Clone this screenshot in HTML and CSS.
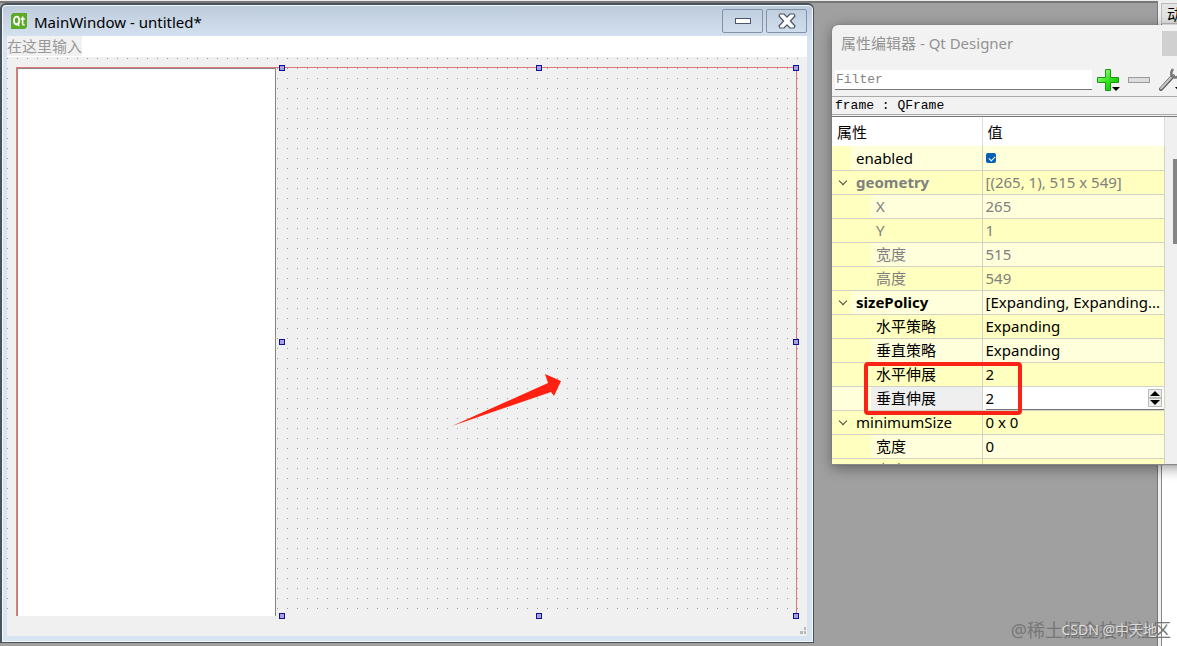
FILE: index.html
```
<!DOCTYPE html>
<html lang="zh-CN">
<head>
    <meta charset="UTF-8">
    <meta name="viewport" content="width=device-width, initial-scale=1.0">
    <title>Qt Designer</title>
    <link rel="stylesheet" href="styles.css">
</head>
<body>
    <div class="desktop">
        <div class="mdi"></div>
        <div class="dock">
            <button class="dock-tab">动作</button>
            <div class="dock-page"></div>
        </div>

        <div class="window form-window">
            <div class="titlebar">
                <svg class="logo" viewBox="0 0 16 16">
                    <path d="M2 0H16V14L14 16H0V2Z" fill="#5caa28"/>
                    <ellipse cx="5.6" cy="7.6" rx="2.6" ry="3.9" fill="none" stroke="#fff" stroke-width="1.8"/>
                    <path d="M6 10L8.2 13M11.6 3.5V10.5Q11.6 12 13.6 11.6M9.6 6H13.8" fill="none" stroke="#fff" stroke-width="1.6"/>
                </svg>
                <span class="title">MainWindow - untitled*</span>
                <button class="win-btn" aria-label="Minimize">
                    <svg width="18" height="8" viewBox="0 0 18 8"><rect x="1.5" y="1.5" width="15" height="5" fill="#fff" stroke="#4c5868"/></svg>
                </button>
                <button class="win-btn" aria-label="Close">
                    <svg width="18" height="16" viewBox="0 0 18 16"><path d="M2 1H6L9 4.2L12 1H16L17 3L12.4 8L17 13L16 15H12L9 11.8L6 15H2L1 13L5.6 8L1 3Z" fill="#fff" stroke="#4c5868" stroke-width="1.2" stroke-linejoin="round"/></svg>
                </button>
            </div>
            <div class="client">
                <div class="menubar"><span class="menu-hint">在这里输入</span></div>
                <div class="form">
                    <div class="layout">
                        <div class="list-view"></div>
                        <div class="frame">
                            <i class="handle top left"></i>
                            <i class="handle top center"></i>
                            <i class="handle top right"></i>
                            <i class="handle middle left"></i>
                            <i class="handle middle right"></i>
                            <i class="handle bottom left"></i>
                            <i class="handle bottom center"></i>
                            <i class="handle bottom right"></i>
                        </div>
                    </div>
                    <svg class="size-grip" viewBox="0 0 6 8"><path d="M0 5H3V8H0ZM4 5H6V8H4ZM4 1H6V4H4Z" fill="#b8b8b8"/></svg>
                </div>
            </div>
        </div>

        <div class="window property-window">
            <div class="property-title">
                <span>属性编辑器 - Qt Designer</span>
                <button class="close-btn" aria-label="Close">×</button>
            </div>
            <div class="toolbar">
                <input class="filter" type="text" placeholder="Filter" aria-label="Filter">
                <button class="tool" aria-label="Add">
                    <svg width="24" height="24" viewBox="0 0 24 24">
                        <defs><linearGradient id="green" x2="1" y2="1"><stop offset="0" stop-color="#c4ffb0"/><stop offset=".5" stop-color="#35e51d"/><stop offset="1" stop-color="#00b800"/></linearGradient></defs>
                        <path d="M9.5 1.5H14.5V9.5H22.5V14.5H14.5V22.5H9.5V14.5H1.5V9.5H9.5Z" fill="url(#green)" stroke="#169a12"/>
                        <path d="M16 19H24L20 23Z" fill="#000"/>
                    </svg>
                </button>
                <button class="tool" aria-label="Remove">
                    <svg width="24" height="24" viewBox="0 0 24 24"><rect x="1.5" y="9.5" width="21" height="5" fill="#dcdcdc" stroke="#9b9b9b"/></svg>
                </button>
                <button class="tool" aria-label="Configure">
                    <svg width="24" height="24" viewBox="0 0 24 24">
                        <path d="M3 21L15 8" stroke="#555" stroke-width="4" stroke-linecap="round"/>
                        <path d="M3 20.5L15 7.5" stroke="#c8c8c8" stroke-width="2" stroke-linecap="round"/>
                        <path d="M15 1Q12 5 14 8Q17 11 21 8" fill="none" stroke="#777" stroke-width="2.5"/>
                        <path d="M17 19H24L20.5 23Z" fill="#000"/>
                    </svg>
                </button>
            </div>
            <div class="object-name">frame : QFrame</div>
            <div class="sheet">
                <table class="props">
                    <colgroup><col class="col-name"><col></colgroup>
                    <thead>
                        <tr><th>属性</th><th>值</th></tr>
                    </thead>
                    <tbody>
                        <tr class="group"><td>enabled</td><td><input type="checkbox" class="check" aria-label="enabled" checked></td></tr>
                        <tr class="group open changed dim"><td>geometry</td><td>[(265, 1), 515 x 549]</td></tr>
                        <tr class="dim"><td>X</td><td>265</td></tr>
                        <tr class="dim"><td>Y</td><td>1</td></tr>
                        <tr class="dim"><td>宽度</td><td>515</td></tr>
                        <tr class="dim"><td>高度</td><td>549</td></tr>
                        <tr class="group open changed"><td>sizePolicy</td><td>[Expanding, Expanding...</td></tr>
                        <tr><td>水平策略</td><td>Expanding</td></tr>
                        <tr><td>垂直策略</td><td>Expanding</td></tr>
                        <tr><td>水平伸展</td><td>2</td></tr>
                        <tr class="editing">
                            <td><label for="vstretch">垂直伸展</label></td>
                            <td>
                                <div class="spin">
                                    <input id="vstretch" type="text" value="2">
                                    <div class="spin-buttons">
                                        <button aria-label="Up"><svg viewBox="0 0 10 5"><path d="M0 5L5 0L10 5Z"/></svg></button>
                                        <button aria-label="Down"><svg viewBox="0 0 10 5"><path d="M0 0L5 5L10 0Z"/></svg></button>
                                    </div>
                                </div>
                            </td>
                        </tr>
                        <tr class="group open"><td>minimumSize</td><td>0 x 0</td></tr>
                        <tr><td>宽度</td><td>0</td></tr>
                        <tr><td>高度</td><td>0</td></tr>
                    </tbody>
                </table>
                <div class="scrollbar"><div class="thumb"></div></div>
            </div>
        </div>

        <!-- annotations -->
        <svg class="arrow" viewBox="0 0 110 54"><path d="M0 53L96 10L93 1L109 8L102 23L99 19Z" fill="#ff2012"/></svg>
        <div class="highlight"></div>
        <div class="watermark juejin">@稀土掘金技术社区</div>
        <div class="watermark csdn">CSDN @中天地</div>
    </div>
</body>
</html>
```
FILE: styles.css
```
* {
    box-sizing: border-box;
}
body {
    margin: 0;
    font: 15px/20px "Noto Sans", "Noto Sans CJK SC", sans-serif;
    color: #000;
}
button {
    padding: 0;
    border: 0;
    background: none;
    font: inherit;
}
.desktop {
    position: relative;
    display: flex;
    height: 100vh;
    overflow: hidden;
    border-top: 1px solid #ececec;
}
.mdi {
    flex: 1;
    background: #a0a0a0;
    border-top: 2px solid #777;
    border-right: 1px solid #777;
}
.dock {
    width: 19px;
    display: flex;
    flex-direction: column;
    background: #f0f0f0;
    padding: 2px 0 0 3px;
    overflow: hidden;
}
.dock-tab {
    width: 60px;
    height: 21px;
    padding-left: 5px;
    text-align: left;
    line-height: 18px;
    background: #e4e4e4;
    border: 1px solid #bbb;
}
.dock-page {
    flex: 1;
    background: #fff;
    border-left: 1px solid #888;
}
.window {
    position: absolute;
}

/* form being edited */
.form-window {
    left: 0;
    top: 2px;
    width: 814px;
    height: 640px;
    display: flex;
    flex-direction: column;
    padding: 1px 6px 6px 5px;
    border: 2px solid #4a525c;
    border-bottom-width: 1px;
    border-right-width: 1px;
    border-radius: 6px 6px 0 0;
    background: linear-gradient(#bccbdb, #d7e4f2 36px);
    box-shadow: inset 0 0 0 1px #f3f8fc;
}
.titlebar {
    display: flex;
    align-items: center;
    height: 30px;
    padding-left: 4px;
    gap: 3px;
}
.logo {
    width: 16px;
    height: 16px;
    margin-right: 4px;
}
.title {
    flex: 1;
    padding-top: 1px;
}
.win-btn {
    display: flex;
    align-items: center;
    justify-content: center;
    width: 41px;
    height: 24px;
    border: 1px solid #8392a8;
    border-radius: 2px;
}
.client {
    flex: 1;
    display: flex;
    flex-direction: column;
}
.menubar {
    height: 21px;
    background: #fff;
}
.menu-hint {
    display: inline-block;
    background: #f1f1f1;
    color: #999;
}
/* 10px dot grid: 1px columns, masked down to one pixel per cell */
.form {
    position: relative;
    flex: 1;
    display: flex;
    padding: 10px 10px 20px 9px;
    background:
        linear-gradient(transparent calc(100% - 25px), #f0f0f0 0),
        linear-gradient(#f0f0f0 9px, transparent 9px) 0 2px / 10px 10px,
        linear-gradient(90deg, #999 1px, #f0f0f0 1px) 0 0 / 10px 10px;
}
.layout {
    flex: 1;
    display: flex;
    gap: 6px;
    border: 1px solid #e07a7a;
    border-bottom: 0;
}
.list-view {
    flex: 1;
    background: #fff;
    border: 1px solid #858585;
    border-left-color: #b98080;
    border-bottom: 0;
}
.frame {
    flex: 2;
    position: relative;
}
.handle {
    position: absolute;
    width: 6px;
    height: 6px;
    margin: -3px;
    background: #a8a0dc;
    border: 1px solid #1010a0;
}
.top { top: 0; }
.middle { top: 50%; }
.bottom { top: 100%; }
.left { left: 0; }
.center { left: 50%; }
.right { left: 100%; }
.size-grip {
    position: absolute;
    right: 1px;
    bottom: 2px;
    width: 6px;
    height: 8px;
}

/* property editor */
.property-window {
    left: 832px;
    right: -40px;
    top: 24px;
    height: 440px;
    display: flex;
    flex-direction: column;
    overflow: hidden;
    background: #f2f2f2;
    border-bottom: 1px solid #888;
    border-radius: 6px 0 0 0;
    box-shadow: 0 0 1px #555, 0 3px 14px rgba(0, 0, 0, 0.4);
}
.property-title {
    display: flex;
    justify-content: space-between;
    align-items: center;
    height: 42px;
    padding: 0 10px 6px 9px;
    color: #929292;
}
.close-btn {
    width: 45px;
    height: 25px;
    background: #d0d0d0;
    color: #fff;
}
.toolbar {
    display: flex;
    align-items: center;
    height: 29px;
    padding: 0 35px 4px 3px;
}
.filter {
    flex: 1;
    min-width: 0;
    height: 20px;
    margin-right: 4px;
    padding: 0 1px;
    border: 0;
    border-bottom: 1px solid #777;
    background: #fff;
    font: 13px "Liberation Mono", monospace;
}
.filter::placeholder {
    color: #848484;
}
.tool {
    width: 24px;
    height: 24px;
}
.tool + .tool {
    margin-left: 7px;
}
.object-name {
    height: 19px;
    padding-left: 3px;
    border: 1px solid #aaa;
    border-left: 0;
    font: 13px/17px "Liberation Mono", monospace;
}
.sheet {
    flex: 1;
    display: flex;
    min-height: 0;
    margin-top: 1px;
    border-top: 1px solid #777;
}
.props {
    width: 333px;
    table-layout: fixed;
    border-collapse: collapse;
    background: #fff;
}
.col-name {
    width: 150px;
}
.props th {
    height: 29px;
    padding: 0 5px;
    text-align: left;
    font-weight: normal;
    border-right: 1px solid #ddd;
}
.props td {
    height: 24px;
    padding: 0 0 0 3px;
    white-space: nowrap;
    border-bottom: 1px solid #d2d2c4;
    border-right: 1px solid #d2d2c4;
    background: #ffffdc;
}
.props tr:nth-child(even) td {
    background: #ffffbf;
}
.props td:first-child {
    padding-left: 44px;
    background: linear-gradient(90deg, #ffffbf 39px, transparent 39px) #ffffdc;
}
.props .group td:first-child {
    padding-left: 24px;
    background: linear-gradient(90deg, #ffffbf 19px, transparent 19px) #ffffdc;
}
.props tr:nth-child(even) td:first-child {
    background: #ffffbf;
}
.props .changed td:first-child {
    font-weight: bold;
}
.props .dim td {
    color: #808080;
}
.open td:first-child::before {
    content: "";
    float: left;
    width: 5px;
    height: 5px;
    margin: 6px 0 0 -16px;
    border: solid #444;
    border-width: 0 1px 1px 0;
    transform: rotate(45deg);
}
.check {
    appearance: none;
    display: block;
    width: 10px;
    height: 10px;
    margin: 0;
    border-radius: 2px;
    background: #0560b6;
}
.check::before {
    content: "";
    display: block;
    width: 5px;
    height: 3px;
    margin: 3px 0 0 3px;
    border: solid #fff;
    border-width: 0 0 1px 1px;
    transform: rotate(-45deg);
}
.props tr.editing td:first-child {
    background: linear-gradient(90deg, #ffffdc 39px, #efefef 39px);
}
.props tr.editing td:last-child {
    background: #fff;
}
.spin {
    display: flex;
    align-items: center;
    height: 23px;
    padding-right: 2px;
    border-bottom: 1px solid #777;
}
.spin input {
    flex: 1;
    min-width: 0;
    padding: 0;
    border: 0;
    font: inherit;
}
.spin-buttons {
    display: flex;
    flex-direction: column;
    width: 14px;
}
.spin-buttons button {
    display: flex;
    align-items: center;
    justify-content: center;
    height: 9px;
    border: 1px solid #bbb;
    background: #eee;
}
.spin-buttons svg {
    width: 10px;
    height: 5px;
}
.scrollbar {
    flex: 1;
    padding: 42px 0 0 8px;
    background: #f0f0f0;
}
.thumb {
    width: 6px;
    height: 85px;
    background: #858585;
}

.arrow {
    position: absolute;
    left: 452px;
    top: 372px;
    width: 110px;
    height: 54px;
}
.highlight {
    position: absolute;
    left: 864px;
    top: 361px;
    width: 158px;
    height: 53px;
    border: 4px solid #fa2316;
    border-radius: 4px;
}
.watermark {
    position: absolute;
    white-space: nowrap;
}
.juejin {
    right: 6px;
    bottom: 6px;
    font-size: 18px;
    color: #777;
}
.csdn {
    right: 20px;
    bottom: 6px;
    font-size: 14px;
    color: #ddd;
    text-shadow: 1px 1px 1px #666;
}
```
